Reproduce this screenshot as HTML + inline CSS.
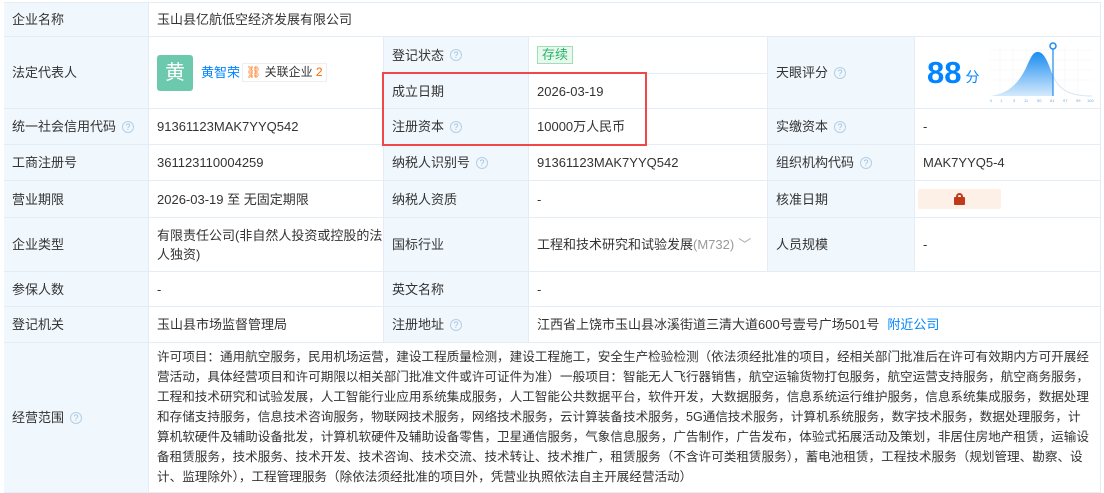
<!DOCTYPE html>
<html><head><meta charset="utf-8"><style>
*{margin:0;padding:0;box-sizing:border-box}
body{width:1104px;height:490px;background:#fff;font-family:"Liberation Sans","Noto Sans CJK SC",sans-serif;font-size:13px;color:#333;position:relative;overflow:hidden}
.c{position:absolute;border-right:1px solid #e4edf5;border-bottom:1px solid #e4edf5;display:flex;align-items:center;padding-left:8px;line-height:19px}
.l{background:#f0f7fd}
.q{display:inline-block;width:12px;height:12px;border:1px solid #b4cfe6;border-radius:50%;color:#9cbcd8;font-size:9px;line-height:10px;text-align:center;margin-left:6px}
.scope div{white-space:nowrap;height:20px;line-height:20px}
</style></head><body>
<div style="position:absolute;left:4px;top:2px;width:1097px;height:488px;border-top:1px solid #e4edf5;border-left:1px solid #e4edf5"></div>
<div class="c l" style="left:4px;top:3px;width:145px;height:34px">企业名称</div>
<div class="c" style="left:149px;top:3px;width:952px;height:34px">玉山县亿航低空经济发展有限公司</div>
<div class="c l" style="left:4px;top:37px;width:145px;height:72px">法定代表人</div>
<div class="c" style="left:149px;top:37px;width:235px;height:72px">
<div style="width:36px;height:36px;background:#6cc9ae;border-radius:3px;color:#fff;font-size:20px;text-align:center;line-height:36px">黄</div>
<a style="color:#0084ff;margin-left:8px;text-decoration:none">黄智荣</a>
<span style="border:1px solid #eee;margin-left:2px;padding:0 3px;font-size:12px;height:19px;line-height:17px"><span style="color:#f60">⛓</span> 关联企业 <span style="color:#f60">2</span></span></div>
<div class="c l" style="left:384px;top:37px;width:145px;height:37px">登记状态<span class="q">?</span></div>
<div class="c" style="left:529px;top:37px;width:239px;height:37px"><span style="background:#e8f8ee;border:1px solid #9ee0b5;color:#2bb36a;padding:0 4px;line-height:16px">存续</span></div>
<div class="c l" style="left:384px;top:74px;width:145px;height:35px">成立日期</div>
<div class="c" style="left:529px;top:74px;width:239px;height:35px">2026-03-19</div>
<div class="c l" style="left:768px;top:37px;width:147px;height:72px">天眼评分<span class="q">?</span></div>
<div class="c" style="left:915px;top:37px;width:186px;height:72px">
<span style="color:#0084ff;font-weight:bold;font-size:31px;margin-left:4px">88</span><span style="color:#0084ff;font-size:14px;margin-left:4px;margin-top:10px">分</span></div>
<svg style="position:absolute;left:988px;top:40px" width="106" height="66" viewBox="0 0 106 66">
<g stroke="#f2f5f8" stroke-width="0.6"><line x1="2" y1="10" x2="104" y2="10"/><line x1="2" y1="20" x2="104" y2="20"/><line x1="2" y1="30" x2="104" y2="30"/><line x1="2" y1="40" x2="104" y2="40"/><line x1="12" y1="6" x2="12" y2="56"/><line x1="25" y1="6" x2="25" y2="56"/><line x1="38" y1="6" x2="38" y2="56"/><line x1="51" y1="6" x2="51" y2="56"/><line x1="64" y1="6" x2="64" y2="56"/><line x1="77" y1="6" x2="77" y2="56"/><line x1="90" y1="6" x2="90" y2="56"/></g>
<defs><linearGradient id="g" x1="0" y1="0" x2="0" y2="1"><stop offset="0" stop-color="#1a8cf0"/><stop offset="1" stop-color="#d4eafc"/></linearGradient></defs>
<path d="M2 56 C20 54 30 44 38 28 C44 14 46 12 50 12 C56 12 60 22 65 36 L65 56 Z" fill="url(#g)"/>
<path d="M65 36 C72 52 85 56 104 56" fill="none" stroke="#dde6ee"/>
<line x1="65" y1="6" x2="65" y2="56" stroke="#1a8cf0" stroke-width="1.2"/>
<circle cx="65" cy="6" r="3" fill="#fff" stroke="#1a8cf0" stroke-width="1.5"/>
<g fill="#6aaee8" font-size="4" font-family="Liberation Sans"><text x="2" y="62">0</text><text x="12" y="62">1</text><text x="25" y="62">3</text><text x="36" y="62">11</text><text x="49" y="62">50</text><text x="62" y="62">81</text><text x="75" y="62">97</text><text x="88" y="62">99</text><text x="99" y="62">100</text></g>
</svg>
<div class="c l" style="left:4px;top:109px;width:145px;height:36px">统一社会信用代码<span class="q">?</span></div>
<div class="c" style="left:149px;top:109px;width:235px;height:36px">91361123MAK7YYQ542</div>
<div class="c l" style="left:384px;top:109px;width:145px;height:36px">注册资本<span class="q">?</span></div>
<div class="c" style="left:529px;top:109px;width:239px;height:36px">10000万人民币</div>
<div class="c l" style="left:768px;top:109px;width:147px;height:36px">实缴资本<span class="q">?</span></div>
<div class="c" style="left:915px;top:109px;width:186px;height:36px">-</div>
<div class="c l" style="left:4px;top:145px;width:145px;height:36px">工商注册号</div>
<div class="c" style="left:149px;top:145px;width:235px;height:36px">361123110004259</div>
<div class="c l" style="left:384px;top:145px;width:145px;height:36px">纳税人识别号<span class="q">?</span></div>
<div class="c" style="left:529px;top:145px;width:239px;height:36px">91361123MAK7YYQ542</div>
<div class="c l" style="left:768px;top:145px;width:147px;height:36px">组织机构代码<span class="q">?</span></div>
<div class="c" style="left:915px;top:145px;width:186px;height:36px">MAK7YYQ5-4</div>
<div class="c l" style="left:4px;top:181px;width:145px;height:37px">营业期限</div>
<div class="c" style="left:149px;top:181px;width:235px;height:37px">2026-03-19 至 无固定期限</div>
<div class="c l" style="left:384px;top:181px;width:145px;height:37px">纳税人资质</div>
<div class="c" style="left:529px;top:181px;width:239px;height:37px">-</div>
<div class="c l" style="left:768px;top:181px;width:147px;height:37px">核准日期</div>
<div class="c" style="left:915px;top:181px;width:186px;height:37px;padding-left:3px"><div style="width:83px;height:20px;background:#fdf0e6;border-radius:2px;position:relative"><div style="position:absolute;left:36px;top:8px;width:11px;height:8px;background:#c0391b;border-radius:1px"></div><div style="position:absolute;left:38px;top:4px;width:7px;height:7px;border:2px solid #c0391b;border-radius:4px 4px 0 0;border-bottom:none"></div></div></div>
<div class="c l" style="left:4px;top:218px;width:145px;height:54px">企业类型</div>
<div class="c" style="left:149px;top:218px;width:235px;height:54px">有限责任公司(非自然人投资或控股的法人独资)</div>
<div class="c l" style="left:384px;top:218px;width:145px;height:54px">国标行业</div>
<div class="c" style="left:529px;top:218px;width:239px;height:54px">工程和技术研究和试验发展<span style="color:#999">(M732)</span><span style="color:#aaa;margin-left:4px">﹀</span></div>
<div class="c l" style="left:768px;top:218px;width:147px;height:54px">人员规模</div>
<div class="c" style="left:915px;top:218px;width:186px;height:54px">-</div>
<div class="c l" style="left:4px;top:272px;width:145px;height:35px">参保人数</div>
<div class="c" style="left:149px;top:272px;width:235px;height:35px">-</div>
<div class="c l" style="left:384px;top:272px;width:145px;height:35px">英文名称</div>
<div class="c" style="left:529px;top:272px;width:572px;height:35px">-</div>
<div class="c l" style="left:4px;top:307px;width:145px;height:36px">登记机关</div>
<div class="c" style="left:149px;top:307px;width:235px;height:36px">玉山县市场监督管理局</div>
<div class="c l" style="left:384px;top:307px;width:145px;height:36px">注册地址<span class="q">?</span></div>
<div class="c" style="left:529px;top:307px;width:572px;height:36px">江西省上饶市玉山县冰溪街道三清大道600号壹号广场501号<span style="color:#0084ff;margin-left:8px">附近公司</span></div>
<div class="c l" style="left:4px;top:343px;width:145px;height:150px">经营范围<span class="q">?</span></div>
<div class="c scope" style="left:149px;top:343px;width:952px;height:150px;display:block;padding-top:4px;font-size:12.6px">
<div>许可项目：通用航空服务，民用机场运营，建设工程质量检测，建设工程施工，安全生产检验检测（依法须经批准的项目，经相关部门批准后在许可有效期内方可开展经</div>
<div>营活动，具体经营项目和许可期限以相关部门批准文件或许可证件为准）一般项目：智能无人飞行器销售，航空运输货物打包服务，航空运营支持服务，航空商务服务，</div>
<div>工程和技术研究和试验发展，人工智能行业应用系统集成服务，人工智能公共数据平台，软件开发，大数据服务，信息系统运行维护服务，信息系统集成服务，数据处理</div>
<div>和存储支持服务，信息技术咨询服务，物联网技术服务，网络技术服务，云计算装备技术服务，5G通信技术服务，计算机系统服务，数字技术服务，数据处理服务，计</div>
<div>算机软硬件及辅助设备批发，计算机软硬件及辅助设备零售，卫星通信服务，气象信息服务，广告制作，广告发布，体验式拓展活动及策划，非居住房地产租赁，运输设</div>
<div>备租赁服务，技术服务、技术开发、技术咨询、技术交流、技术转让、技术推广，租赁服务（不含许可类租赁服务），蓄电池租赁，工程技术服务（规划管理、勘察、设</div>
<div>计、监理除外），工程管理服务（除依法须经批准的项目外，凭营业执照依法自主开展经营活动）</div>
</div>
<div style="position:absolute;left:382px;top:72px;width:265px;height:74px;border:2px solid #f04848"></div>
</body></html>
